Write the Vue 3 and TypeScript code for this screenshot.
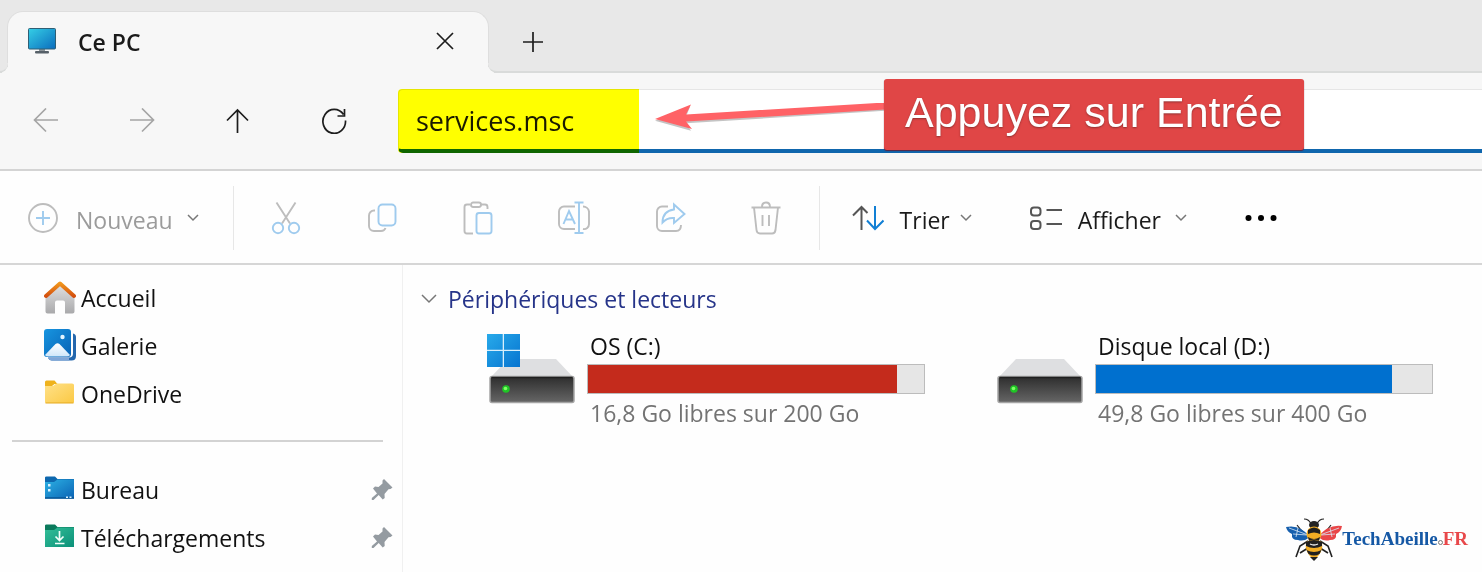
<script setup lang="ts">
import { ref } from 'vue'

interface Drive {
  name: string
  free: string
  used: number
  tone: 'full' | 'normal'
  system: boolean
}

const address = ref('services.msc')

const drives: Drive[] = [
  { name: 'OS (C:)', free: '16,8 Go libres sur 200 Go', used: 92, tone: 'full', system: true },
  { name: 'Disque local (D:)', free: '49,8 Go libres sur 400 Go', used: 88, tone: 'normal', system: false },
]
</script>

<template>
  <div class="window">
    <header class="tabs">
      <div class="tab">
        <svg class="tab-icon" width="28" height="26" viewBox="0 0 28 26" aria-hidden="true">
          <defs>
            <linearGradient id="screen" x1="0" y1="0" x2="1" y2="1">
              <stop offset="0" stop-color="#35cfe6" />
              <stop offset="1" stop-color="#0b6cbd" />
            </linearGradient>
          </defs>
          <rect x="11" y="20" width="6" height="4" fill="#8c9499" />
          <rect x="7" y="23" width="14" height="2.4" rx="1" fill="#566068" />
          <rect x="0.5" y="0.5" width="27" height="20.5" rx="1" fill="url(#screen)" stroke="#2f5f75" />
        </svg>
        <span class="tab-title">Ce PC</span>
        <button class="plain" aria-label="Fermer l'onglet">
          <svg width="18" height="18" viewBox="0 0 18 18" class="line"><path d="M1 1l16 16M17 1L1 17" /></svg>
        </button>
      </div>
      <button class="plain new-tab" aria-label="Nouvel onglet">
        <svg width="22" height="22" viewBox="0 0 22 22" class="line"><path d="M11 1v20M1 11h20" /></svg>
      </button>
    </header>

    <nav class="nav">
      <button class="plain off" aria-label="Précédent" disabled>
        <svg width="26" height="26" viewBox="0 0 26 26" class="line"><path d="M25 12H1.5M13 .5L1.5 12L13 23.500" /></svg>
      </button>
      <button class="plain off" aria-label="Suivant" disabled>
        <svg width="26" height="26" viewBox="0 0 26 26" class="line"><path d="M1 12h23.500M13 .5L24.500 12L13 23.500" /></svg>
      </button>
      <button class="plain" aria-label="Dossier parent">
        <svg width="26" height="26" viewBox="0 0 26 26" class="line"><path d="M12.500 25V2M2 12.500L12.500 2L23 12.500" /></svg>
      </button>
      <button class="plain" aria-label="Actualiser">
        <svg width="26" height="26" viewBox="0 0 26 26" class="line"><path d="M24.500 12.500A11.300 12 0 1 1 22.500 6.500M23.500 1v7h-7" /></svg>
      </button>
      <div class="address">
        <input v-model="address" class="address-input" type="text" aria-label="Adresse" />
        <span class="highlight"></span>
        <svg class="arrow" width="230" height="30" viewBox="0 0 230 30" aria-hidden="true">
          <path d="M0 17L35 3L31 13L230 .5V7L31 19.500L36 27Z" fill="#8a8a8a" opacity=".5" transform="translate(0 .8)" />
          <path d="M0 16L36 1.500L31 11.500L230 -.5V6.500L31 18.500L37 26Z" fill="#ff6266" />
        </svg>
        <div class="callout">Appuyez sur Entrée</div>
      </div>
    </nav>

    <div class="toolbar" role="toolbar" aria-label="Commandes">
      <button class="plain command new" disabled>
        <svg width="30" height="30" viewBox="0 0 30 30" class="tool"><circle cx="15" cy="15" r="14" /><path class="blue" d="M15 8v14M8 15h14" /></svg>
        <span>Nouveau</span>
        <svg width="12" height="8" viewBox="0 0 12 8" class="chevron"><path d="M1 1l5 5 5-5" /></svg>
      </button>
      <span class="separator"></span>
      <div class="tools">
        <button class="plain" aria-label="Couper" disabled>
          <svg width="32" height="34" viewBox="0 0 32 34" class="tool"><path d="M6.500 1.500L20 22.500M25.500 1.500L12 22.500" /><circle class="blue" cx="8" cy="27" r="5.200" /><circle class="blue" cx="24" cy="27" r="5.200" /></svg>
        </button>
        <button class="plain" aria-label="Copier" disabled>
          <svg width="32" height="34" viewBox="0 0 32 34" class="tool"><path d="M9 9.500H8a5 5 0 0 0-5 5V25a5 5 0 0 0 5 5h7q3.500 0 4.500-3" /><rect class="blue" x="12.500" y="3.500" width="17" height="21" rx="4" /></svg>
        </button>
        <button class="plain" aria-label="Coller" disabled>
          <svg width="32" height="34" viewBox="0 0 32 34" class="tool"><path d="M8 3.500H5A2.500 2.500 0 0 0 2.500 6v24A2.500 2.500 0 0 0 5 32.500h6M19 3.500h4A2.500 2.500 0 0 1 25.500 6v2" /><rect x="9" y="1.500" width="10" height="4.500" rx="2.200" /><rect class="blue" x="14.500" y="12" width="15" height="20.500" rx="2.500" /></svg>
        </button>
        <button class="plain" aria-label="Renommer" disabled>
          <svg width="32" height="34" viewBox="1 0 32 34" class="tool"><path d="M18 5.500H7a5 5 0 0 0-5 5V23a5 5 0 0 0 5 5h11M26 5.500a6 6 0 0 1 6 5V23a5 5 0 0 1-6 5" /><path class="blue" d="M6.500 23L12 10l6 13M8.500 18.500h7.500M22 1.500v30.500M17.500 1.500h9M17.500 32h9" /></svg>
        </button>
        <button class="plain" aria-label="Partager" disabled>
          <svg width="32" height="34" viewBox="0 0 32 34" class="tool"><path d="M14 5.500H8a5 5 0 0 0-5 5V25a5 5 0 0 0 5 5h14q5 0 5-6" /><path class="blue" d="M20 3.500L30.500 13L20 22v-5q-7-.5-11.500 4.500Q8.500 10 20 8.500Z" /></svg>
        </button>
        <button class="plain" aria-label="Supprimer" disabled>
          <svg width="32" height="34" viewBox="0 0 32 34" class="tool"><path d="M1.500 6.500h29M12 6q0-4.500 4-4.500t4 4.500M4 6.500L6.500 29q.4 3.500 3.500 3.500h12q3 0 3.500-3.500L28 6.500M12.500 14v11M19 14v11" /></svg>
        </button>
      </div>
      <span class="separator last"></span>
      <button class="plain command">
        <svg width="32" height="26" viewBox="0 0 32 26" class="tool dark"><path d="M9.500 25V2M1 10.500L9.500 2l6 6" /><path class="blue" d="M23 1v23M15 15.500l8 8.500 8.500-8.500" /></svg>
        <span>Trier</span>
        <svg width="12" height="8" viewBox="0 0 12 8" class="chevron"><path d="M1 1l5 5 5-5" /></svg>
      </button>
      <button class="plain command view">
        <svg width="32" height="26" viewBox="0 0 32 26" class="tool dark"><rect x="1" y="2.500" width="9.500" height="8" rx="3" /><rect x="1" y="16" width="9.500" height="8" rx="3" /><path d="M16.500 5H32M16.500 19H32" /></svg>
        <span>Afficher</span>
        <svg width="12" height="8" viewBox="0 0 12 8" class="chevron"><path d="M1 1l5 5 5-5" /></svg>
      </button>
      <button class="plain more" aria-label="Plus d'options">
        <svg width="32" height="8" viewBox="0 0 32 8"><circle cx="3.500" cy="4" r="3" /><circle cx="16" cy="4" r="3" /><circle cx="28.500" cy="4" r="3" /></svg>
      </button>
    </div>

    <div class="body">
      <aside class="sidebar">
        <a class="place" href="#">
          <svg width="32" height="34" viewBox="0 0 32 34" aria-hidden="true">
            <defs>
              <linearGradient id="wall" x1="0" y1="0" x2="0" y2="1"><stop offset="0" stop-color="#e4e4e4" /><stop offset="1" stop-color="#a9a9ab" /></linearGradient>
              <linearGradient id="roof" x1="0" y1="0" x2="0" y2="1"><stop offset="0" stop-color="#f0951c" /><stop offset="1" stop-color="#d4500f" /></linearGradient>
            </defs>
            <path d="M1.500 14L16 2l14.500 12v16.500a2 2 0 0 1-2 2H21V21.500a2 2 0 0 0-2-2h-6a2 2 0 0 0-2 2V32.500H3.500a2 2 0 0 1-2-2Z" fill="url(#wall)" />
            <path d="M2 15L16 2.500L30 15" fill="none" stroke="url(#roof)" stroke-width="4" stroke-linecap="round" stroke-linejoin="round" />
          </svg>
          <span>Accueil</span>
        </a>
        <a class="place" href="#">
          <svg width="32" height="34" viewBox="0 0 32 34" aria-hidden="true">
            <defs>
              <linearGradient id="photo" x1="0" y1="0" x2="1" y2="1"><stop offset="0" stop-color="#1795e0" /><stop offset="1" stop-color="#0862b5" /></linearGradient>
              <linearGradient id="hill" x1="0" y1="0" x2="0" y2="1"><stop offset="0" stop-color="#fff" /><stop offset="1" stop-color="#cfe6fa" /></linearGradient>
            </defs>
            <path d="M29 4.500q3 .5 3 3.500v19q0 4.500-4.500 4.500H8q-3 0-4-3h21q4 0 4-4Z" fill="#2467ad" />
            <path d="M4 28.500h21v3H8q-3 0-4-3Z" fill="#7fa6d8" />
            <rect x="0" y="0" width="27" height="28" rx="3" fill="url(#photo)" />
            <path d="M1 26L11.500 15q2-1.700 4 0L26 26q-1 1.500-3 1.500H4Q2 27.500 1 26Z" fill="url(#hill)" />
            <circle cx="18.500" cy="8" r="2.200" fill="#e3f5ff" />
          </svg>
          <span>Galerie</span>
        </a>
        <a class="place" href="#">
          <svg width="32" height="34" viewBox="0 0 32 34" aria-hidden="true">
            <defs><linearGradient id="yellow" x1="0" y1="0" x2="1" y2="1"><stop offset="0" stop-color="#ffe189" /><stop offset="1" stop-color="#fbc944" /></linearGradient></defs>
            <path d="M1 5q0-1.500 1.500-1.500h8L13.500 7h-3L8 9H1Z" fill="#efb21c" />
            <path d="M1 9h8l3.500-2.500H28q2 0 2 1.500v17q0 1-1 1H2q-1 0-1-1Z" fill="url(#yellow)" />
            <path d="M1.500 26h28" stroke="#e5a91f" stroke-width="1" />
          </svg>
          <span>OneDrive</span>
        </a>
        <hr class="divider" />
        <a class="place" href="#">
          <svg width="32" height="34" viewBox="0 0 32 34" aria-hidden="true">
            <defs><linearGradient id="desk" x1="0" y1="0" x2="1" y2="1"><stop offset="0" stop-color="#2cb1e4" /><stop offset="1" stop-color="#0b63b4" /></linearGradient></defs>
            <path d="M1 4.500q0-1 1.500-1h8.500L13.500 6H30v4H1Z" fill="#0d67ae" />
            <path d="M1 9h9l3.500-2.500H30V25.500H1Z" fill="url(#desk)" />
            <path d="M1 25h29" stroke="#075495" stroke-width="1.500" />
            <path d="M4 11h2.500v2.500H4zM4 16h2.500v2.500H4zM22 23.500h2v1.500h-2zM25.500 23.500h2v1.500h-2z" fill="#d6f1ff" />
          </svg>
          <span>Bureau</span>
          <svg class="pin" width="22" height="22" viewBox="0 0 22 22" aria-hidden="true"><path d="M13 0l8.500 8.500-2 1.500-2 .2-4 4.800.2 4-2 1.500-4-4.500L2.500 21H.8v-2L6 14.500 2 9.500 4 7.500l3.500.5L11.500 4.500v-3Z" /></svg>
        </a>
        <a class="place" href="#">
          <svg width="32" height="34" viewBox="0 0 32 34" aria-hidden="true">
            <defs><linearGradient id="down" x1="0" y1="0" x2="1" y2="1"><stop offset="0" stop-color="#33bf98" /><stop offset="1" stop-color="#0b9079" /></linearGradient></defs>
            <path d="M1 4.500q0-1 1.500-1h8.500L13.500 6H30v4H1Z" fill="#0b7a5c" />
            <path d="M1 9h9l3.500-2.500H30V26H1Z" fill="url(#down)" />
            <path d="M15.500 10v9M11.500 15.500l4 4 4-4M11 22.500h9.500" fill="none" stroke="#f2fffa" stroke-width="1.700" />
          </svg>
          <span>Téléchargements</span>
          <svg class="pin" width="22" height="22" viewBox="0 0 22 22" aria-hidden="true"><path d="M13 0l8.500 8.500-2 1.500-2 .2-4 4.800.2 4-2 1.500-4-4.500L2.500 21H.8v-2L6 14.500 2 9.500 4 7.500l3.500.5L11.500 4.500v-3Z" /></svg>
        </a>
      </aside>

      <main class="content">
        <h2 class="group">
          <svg width="16" height="10" viewBox="0 0 16 10" class="chevron"><path d="M1 1l7 7 7-7" /></svg>
          <span>Périphériques et lecteurs</span>
        </h2>
        <div class="drives">
          <section v-for="drive in drives" :key="drive.name" class="drive">
            <svg class="drive-icon" width="90" height="72" viewBox="0 0 90 72" aria-hidden="true">
              <defs>
                <linearGradient id="front" x1="0" y1="0" x2="0" y2="1"><stop offset="0" stop-color="#2d2d2d" /><stop offset="1" stop-color="#666" /></linearGradient>
                <linearGradient id="win" x1="0" y1="0" x2="1" y2="1"><stop offset="0" stop-color="#28aaea" /><stop offset="1" stop-color="#0674d0" /></linearGradient>
              </defs>
              <path d="M21 25H69L86 43H4Z" fill="#dedfe1" />
              <rect x="3" y="42.500" width="84" height="26" rx="2" fill="url(#front)" stroke="#a5a5a5" stroke-width="1.500" />
              <path d="M4.500 43.500h81" stroke="#202020" stroke-width="1.500" />
              <circle cx="19" cy="55" r="3.800" fill="#20c526" />
              <circle cx="18.500" cy="54.500" r="1.800" fill="#7dff65" />
              <path v-if="drive.system" d="M0 0H33V33H0Z" fill="#d9effb" />
              <path v-if="drive.system" d="M0 0h15.700v15.700H0zM17 0h16v15.700h-16zM0 17h15.700v16H0zM17 17h16v16h-16z" fill="url(#win)" />
            </svg>
            <div class="drive-info">
              <span class="drive-name">{{ drive.name }}</span>
              <div
                class="bar"
                role="meter"
                :aria-label="drive.name"
                aria-valuemin="0"
                aria-valuemax="100"
                :aria-valuenow="drive.used"
              >
                <div class="fill" :class="drive.tone" :style="{ width: drive.used + '%' }"></div>
              </div>
              <span class="drive-free">{{ drive.free }}</span>
            </div>
          </section>
        </div>

        <div class="brand">
          <svg width="56" height="44" viewBox="0 0 56 44" aria-hidden="true">
            <g fill="none" stroke="#222" stroke-width="1.200">
              <path d="M25 7Q23 2 18 2M31 7Q33 2 38 2M21 19L15 13 11 8M35 19l6-6 4-5" />
              <path d="M22 24L14 29 10 40M34 24l8 5 4 11M22 31l-8 5M34 31l8 5" stroke-width="1.600" />
            </g>
            <path d="M24 20Q14 7 0 10Q1 15 6 17Q5 23 12 23Q18 25 24 20Z" fill="#1760ae" />
            <path d="M32 20Q42 7 56 9Q55 15 50 17Q51 23 44 23Q38 25 32 20Z" fill="#e94648" />
            <path d="M3 11L22 18M7 17l14 1M12 11l-2 9M53 11L34 18M49 17l-14 1M44 11l2 9" stroke="#d8e7f5" stroke-width=".8" fill="none" />
            <ellipse cx="28" cy="8" rx="5" ry="4" fill="#242424" />
            <ellipse cx="28" cy="17" rx="7.500" ry="7.500" fill="#f2ad24" />
            <path d="M22 13q6-5 12 0v4q-6-3-12 0ZM22 20q6 4 12 0l-1 4H23Z" fill="#202020" />
            <path d="M20 25q8-5 16 0 2 10-8 18-10-8-8-18Z" fill="#f2ad24" />
            <path d="M20 25q8-4 16 0v4q-8 4-16 0ZM20.500 33q7.500 4 15 0l-2 4q-5.500 3-11 0ZM24 40h8l-4 4Z" fill="#202020" />
            <path d="M24 27q4 2 8 0" stroke="#eee" stroke-width="1.300" fill="none" />
          </svg>
          <span class="brand-name">TechAbeille<i class="dot"></i><b>FR</b></span>
        </div>
      </main>
    </div>
  </div>
</template>

<style>
body {
  background: #fefefe;
}
</style>

<style scoped>
.window {
  display: flex;
  flex-direction: column;
  min-height: 100vh;
  box-sizing: border-box;
  overflow: hidden;
  background: #fefefe;
  color: #1a1a1a;
  font-family: "Open Sans", "Noto Sans", sans-serif;
  font-size: 23px;
  line-height: 32px;
}
.plain {
  display: flex;
  align-items: center;
  padding: 0;
  border: 0;
  background: none;
  color: inherit;
  font: inherit;
}
svg {
  flex: none;
}
.line {
  fill: none;
  stroke: #1d1d1d;
  stroke-width: 1.7;
}
.off .line {
  stroke: #a5a5a5;
}
.tabs {
  display: flex;
  align-items: center;
  height: 73px;
  box-sizing: border-box;
  padding-left: 7px;
  border-bottom: 2px solid #d9dbda;
  background: #e8e8e8;
}
.tab {
  position: relative;
  display: flex;
  align-items: center;
  align-self: flex-end;
  width: 482px;
  height: 62px;
  box-sizing: border-box;
  margin-bottom: -2px;
  padding: 0 34px 3px 20px;
  border: 1px solid #dedede;
  border-bottom: 0;
  border-radius: 16px 16px 0 0;
  background: #f7f7f7;
}
.tab::before,
.tab::after {
  content: "";
  position: absolute;
  bottom: 0;
  width: 10px;
  height: 10px;
  box-sizing: border-box;
  border-bottom: 2px solid #d9dbda;
  background: #e8e8e8;
  box-shadow: 0 4px 0 #f7f7f7;
}
.tab::before {
  right: 100%;
  border-bottom-right-radius: 9px;
  box-shadow: 4px 4px 0 #f7f7f7;
}
.tab::after {
  left: 100%;
  border-bottom-left-radius: 9px;
  box-shadow: -4px 4px 0 #f7f7f7;
}
.tab-title {
  flex: 1;
  margin-left: 22px;
  padding-top: 2px;
  font-weight: 600;
}
.new-tab {
  margin-left: 33px;
  margin-top: 12px;
}
.nav {
  display: flex;
  align-items: center;
  gap: 70px;
  height: 98px;
  box-sizing: border-box;
  padding-left: 33px;
  border-bottom: 2px solid #d4d4d4;
  background: #f7f7f7;
}
.address {
  position: relative;
  flex: 1;
  height: 64px;
  margin-left: -19px;
}
.address-input {
  width: 100%;
  height: 100%;
  box-sizing: border-box;
  padding: 1px 17px 0;
  border: 1px solid #e6e6e6;
  border-right: 0;
  border-bottom: 4px solid #0f66ad;
  border-radius: 5px 0 0 5px;
  outline: 0;
  background: #fff;
  color: #1a1a1a;
  font: inherit;
  font-size: 27px;
}
.highlight {
  position: absolute;
  inset: 0 auto 0 0;
  width: 241px;
  border-radius: 4px 0 0 4px;
  background: #ff0;
  mix-blend-mode: multiply;
}
.arrow {
  position: absolute;
  top: 14px;
  left: 257px;
}
.callout {
  position: absolute;
  top: -10px;
  left: 486px;
  padding: 0 21px 4px;
  border-radius: 3px;
  background: #e04646;
  box-shadow: 0 1px 1px #5a2340;
  color: #fff;
  font-family: "Liberation Sans", Arial, sans-serif;
  font-size: 43px;
  line-height: 67px;
  white-space: nowrap;
  text-shadow: 0 1px 2px #8d3030;
}
.toolbar {
  display: flex;
  align-items: center;
  height: 94px;
  box-sizing: border-box;
  padding: 2px 0 0 28px;
  border-bottom: 2px solid #d6d6d6;
}
.command {
  gap: 10px;
}
.command span {
  padding-top: 4px;
}
.command .tool {
  margin-right: 6px;
}
.new {
  color: #9b9b9b;
}
.new span {
  margin: 0 4px 0 2px;
}
.separator {
  width: 1px;
  height: 64px;
  margin: 0 36px 0 34px;
  background: #e7e7e7;
}
.separator.last {
  margin: 0 32px 0 37px;
}
.tools {
  display: flex;
  gap: 64px;
}
.tool {
  fill: none;
  stroke: #bdbdbd;
  stroke-width: 1.9;
}
.tool .blue {
  stroke: #9fcbee;
}
.tool.dark {
  stroke: #555;
  stroke-width: 2;
}
.tool.dark .blue {
  stroke: #117fd4;
}
.chevron {
  fill: none;
  stroke: #777;
  stroke-width: 1.5;
}
.view {
  margin-left: 58px;
}
.view span {
  margin-right: 4px;
}
.more {
  margin-left: 58px;
}
.body {
  display: flex;
  flex: 1;
}
.sidebar {
  width: 403px;
  box-sizing: border-box;
  padding-top: 9px;
  border-right: 1px solid #f0f0f0;
}
.place {
  display: flex;
  align-items: center;
  gap: 5px;
  height: 48px;
  padding: 0 9px 0 44px;
  color: #111;
  text-decoration: none;
}
.pin {
  margin-left: auto;
  fill: #949ba1;
}
.divider {
  height: 2px;
  margin: 22px 19px 24px 12px;
  border: 0;
  background: #d3d3d3;
}
.content {
  display: flex;
  flex: 1;
  flex-direction: column;
  min-width: 0;
  padding: 18px 14px 11px 18px;
}
.group {
  display: flex;
  align-items: center;
  gap: 11px;
  margin: 0;
  color: #263489;
  font-size: 23px;
  font-weight: 400;
}
.drives {
  display: flex;
  flex-wrap: wrap;
  gap: 70px;
  padding: 15px 0 0 66px;
}
.drive {
  display: flex;
  gap: 10px;
}
.drive-icon {
  margin-top: 4px;
}
.drive-info {
  display: flex;
  flex-direction: column;
  width: 338px;
}
.drive-name,
.drive-free {
  padding-left: 3px;
}
.drive-name {
  color: #111;
}
.drive-free {
  margin-top: 3px;
  color: #737373;
}
.bar {
  height: 30px;
  box-sizing: border-box;
  margin-top: 2px;
  border: 1px solid #bcbcbc;
  background: #e6e6e6;
}
.fill {
  height: 100%;
}
.fill.full {
  background: #c42b1c;
}
.fill.normal {
  background: #0070cf;
}
.brand {
  display: flex;
  align-items: center;
  align-self: flex-end;
  margin-top: auto;
}
.brand-name {
  color: #1558a5;
  font-family: "Liberation Serif", serif;
  font-size: 19px;
  font-weight: 700;
}
.brand-name b {
  color: #e8484a;
}
.dot {
  display: inline-block;
  width: 3px;
  height: 3px;
  border: 1px solid #777;
  border-radius: 50%;
}
</style>
